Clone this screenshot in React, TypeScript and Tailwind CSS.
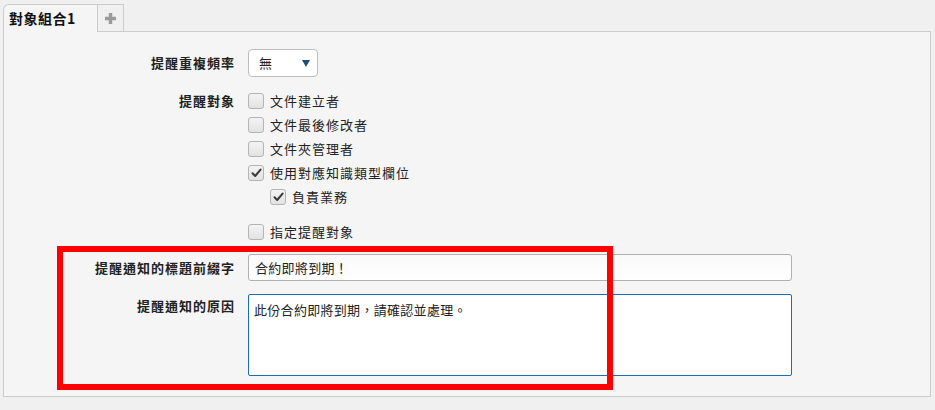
import React from "react";

const FONT = { fontFamily: '"Noto Sans CJK TC", "Noto Sans", sans-serif' };

function Check({ checked }: { checked?: boolean }) {
  return (
    <span className="flex h-[16px] w-[16px] shrink-0 items-center justify-center rounded-[3px] border border-[#b4b4b4] bg-gradient-to-b from-[#f4f4f4] to-[#e2e2e2]">
      {checked && (
        <svg width="11" height="10" viewBox="0 0 11 10">
          <path d="M1.5 5.2 L4.2 8 L9.6 1.6" fill="none" stroke="#3a3a3a" strokeWidth="2" strokeLinecap="round" strokeLinejoin="round" />
        </svg>
      )}
    </span>
  );
}

function CheckRow({ label, checked, indent }: { label: string; checked?: boolean; indent?: boolean }) {
  return (
    <div className={`flex h-[24px] items-center gap-[6px] ${indent ? "pl-[22px]" : ""}`}>
      <Check checked={checked} />
      <span className="text-[13px] tracking-[1px] text-[#222]">{label}</span>
    </div>
  );
}

export default function App() {
  return (
    <div className="relative h-[410px] w-[935px] bg-[#f0f0f0] pl-[3px] pt-[4px]" style={FONT}>
      {/* tabs */}
      <div className="flex h-[27px]">
        <div className="relative z-10 flex h-[28px] w-[95px] items-center rounded-tl-[6px] border border-b-0 border-[#cccccc] bg-[#f5f5f5] pl-[5px] text-[14px] font-bold tracking-[0.5px] text-[#111]">
          對象組合1
        </div>
        <div className="flex h-[27px] w-[26px] items-center justify-center border border-l-0 border-b-0 border-[#cccccc] bg-[#f0f0f0]">
          <svg width="13" height="13" viewBox="0 0 13 13">
            <path d="M6.5 1 V12 M1 6.5 H12" stroke="#9a9a9a" strokeWidth="3.5" />
          </svg>
        </div>
      </div>
      {/* panel */}
      <div className="h-[366px] w-[928px] border border-[#cccccc] bg-[#f5f5f5] pt-[17px]">
        <div className="grid grid-cols-[231px_1fr] gap-x-[13px]">
          <div className="flex h-[28px] items-center justify-end text-[13px] font-bold tracking-[1px] text-[#222]">提醒重複頻率</div>
          <div className="flex">
            <div className="flex h-[28px] w-[70px] items-center justify-between rounded-[4px] border border-[#bdbdbd] bg-white pl-[10px] pr-[7px] text-[13px] text-[#222]">
              <span>無</span>
              <svg width="8" height="7" viewBox="0 0 8 7">
                <path d="M0 0 H8 L4 7 Z" fill="#1c4e78" />
              </svg>
            </div>
          </div>

          <div className="mt-[12px] flex h-[24px] items-center justify-end text-[13px] font-bold tracking-[1px] text-[#222]">提醒對象</div>
          <div className="mt-[12px] flex flex-col">
            <CheckRow label="文件建立者" />
            <CheckRow label="文件最後修改者" />
            <CheckRow label="文件夾管理者" />
            <CheckRow label="使用對應知識類型欄位" checked />
            <CheckRow label="負責業務" checked indent />
            <div className="mt-[11px]">
              <CheckRow label="指定提醒對象" />
            </div>
          </div>

          <div className="mt-[10px] flex h-[27px] items-center justify-end text-[13px] font-bold tracking-[1px] text-[#222]">提醒通知的標題前綴字</div>
          <div className="mt-[10px]">
            <div className="flex h-[27px] w-[544px] items-center rounded-[3px] border border-[#b0b0b0] bg-gradient-to-b from-[#f9f9f9] to-[#ffffff] pl-[6px] text-[13px] tracking-[0.3px] text-[#222]">
              合約即將到期！
            </div>
          </div>

          <div className="mt-[13px] flex justify-end pt-[2px] text-[13px] font-bold tracking-[1px] text-[#222]">提醒通知的原因</div>
          <div className="mt-[13px]">
            <div className="h-[82px] w-[544px] rounded-[2px] border border-[#1d6cb8] bg-white px-[5px] pt-[5px] text-[13px] tracking-[0.3px] text-[#222]">
              此份合約即將到期，請確認並處理。
            </div>
          </div>
        </div>
      </div>
      {/* red highlight overlay */}
      <div className="pointer-events-none absolute left-[57px] top-[246px] h-[144px] w-[556px] border-[6px] border-[#ff0000]" />
    </div>
  );
}
